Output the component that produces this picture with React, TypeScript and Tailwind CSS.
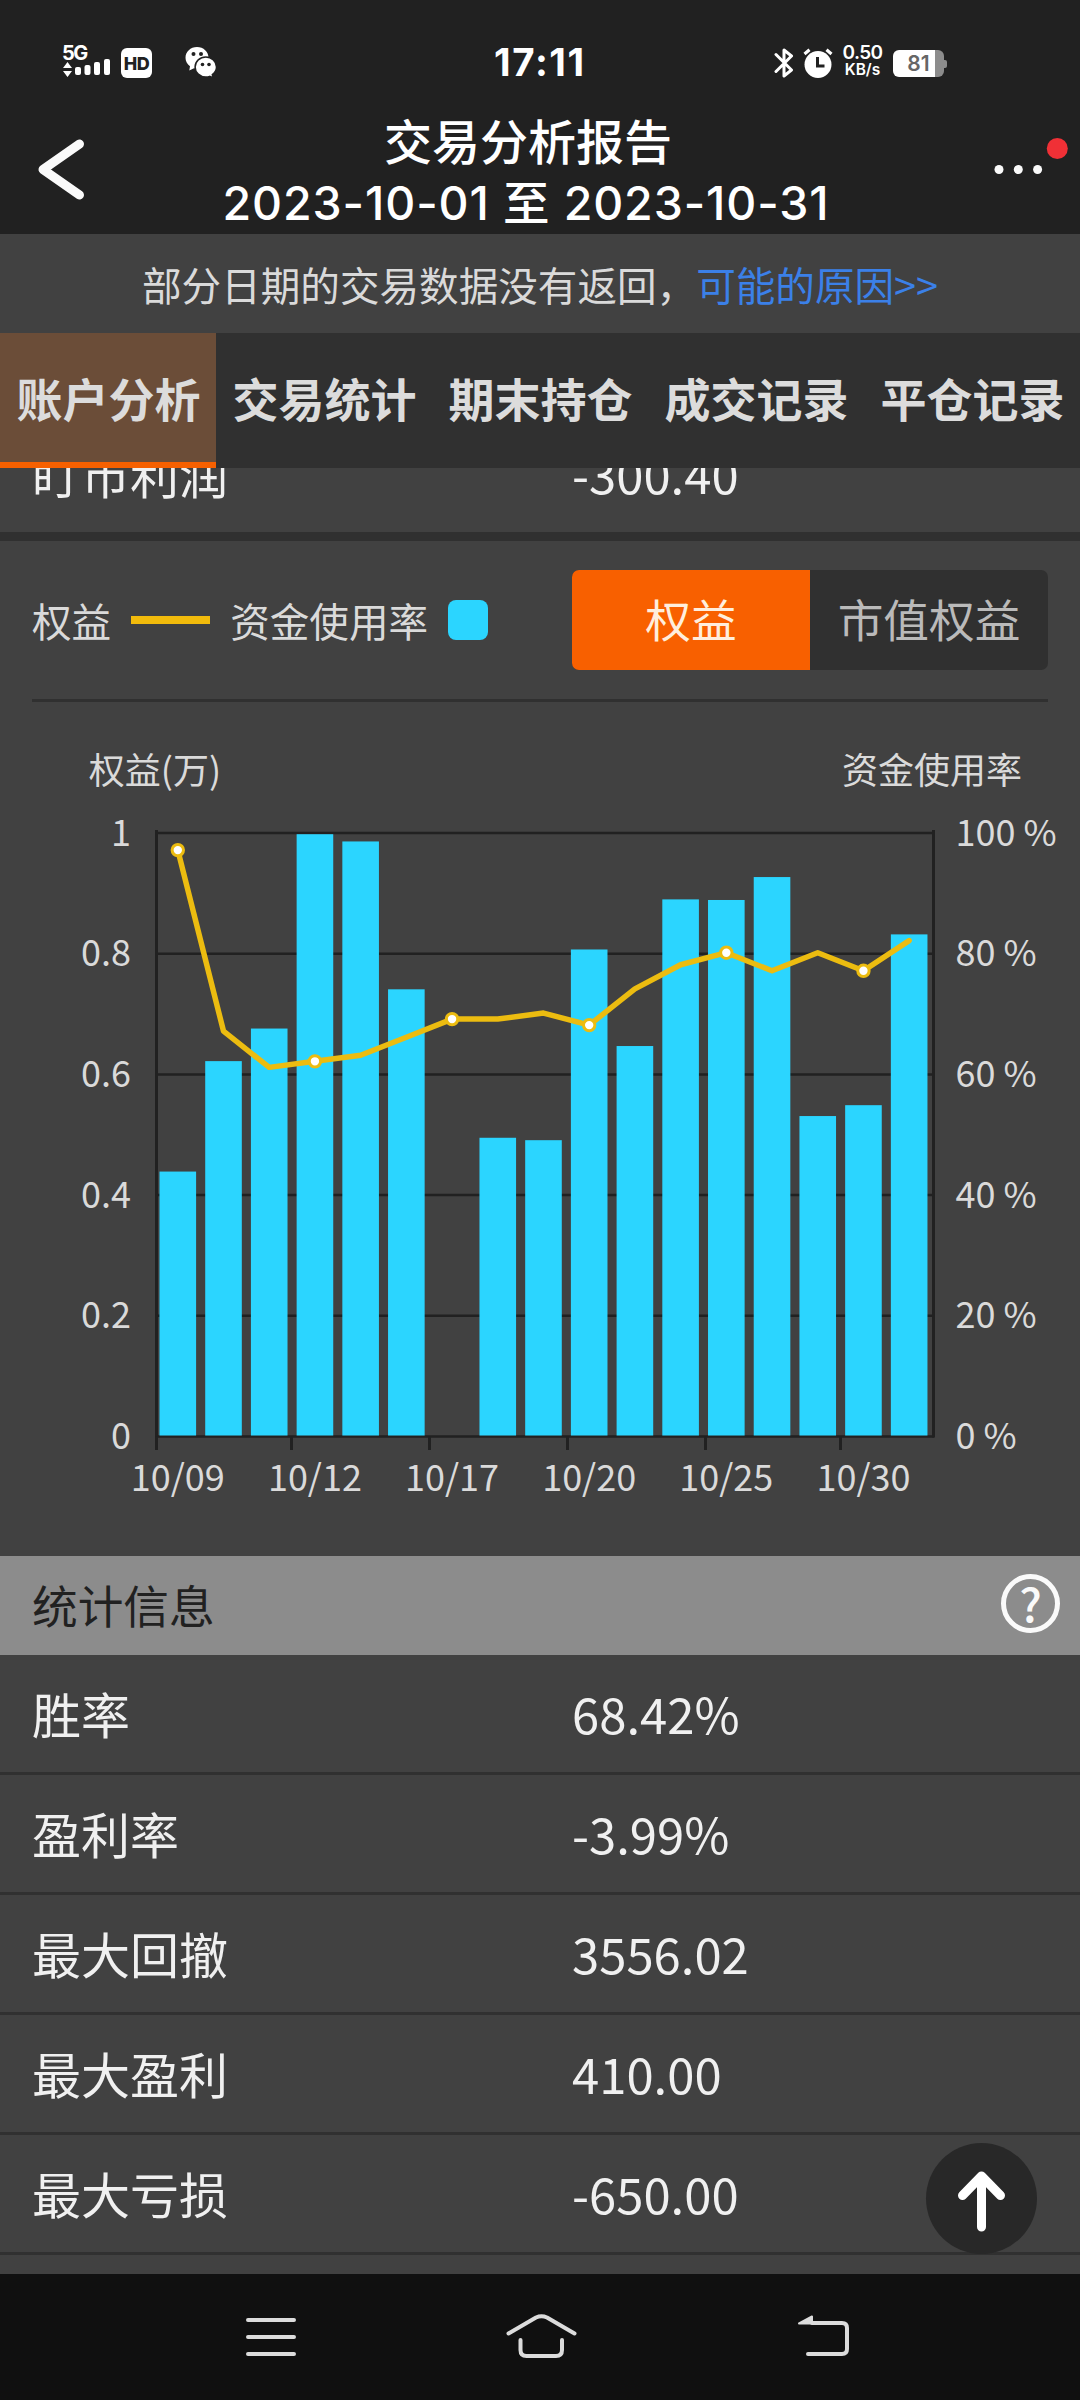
import { useState } from "react";

const TABS = ["账户分析", "交易统计", "期末持仓", "成交记录", "平仓记录"];

const STATS = [
  { label: "胜率", value: "68.42%" },
  { label: "盈利率", value: "-3.99%" },
  { label: "最大回撤", value: "3556.02" },
  { label: "最大盈利", value: "410.00" },
  { label: "最大亏损", value: "-650.00" },
];

// usage: fund usage in percent (bars), equity: in units of 10k (line)
const DAYS = [
  { usage: 43.9, equity: 0.97, date: "10/09" },
  { usage: 62.2, equity: 0.67 },
  { usage: 67.6, equity: 0.61 },
  { usage: 99.8, equity: 0.62, date: "10/12" },
  { usage: 98.6, equity: 0.63 },
  { usage: 74.1, equity: 0.66 },
  { usage: 0, equity: 0.69, date: "10/17" },
  { usage: 49.5, equity: 0.69 },
  { usage: 49.1, equity: 0.7 },
  { usage: 80.7, equity: 0.68, date: "10/20" },
  { usage: 64.7, equity: 0.74 },
  { usage: 89.0, equity: 0.78 },
  { usage: 88.9, equity: 0.8, date: "10/25" },
  { usage: 92.7, equity: 0.77 },
  { usage: 53.1, equity: 0.8 },
  { usage: 54.9, equity: 0.77, date: "10/30" },
  { usage: 83.2, equity: 0.82 },
];

const TICKS = [156.5, 291.5, 429.5, 567.5, 705.5, 840.5];

function StatusBar() {
  return (
    <div className="flex h-[104px] items-end pb-[26px] pl-[62px] font-['Inter','Noto_Sans_CJK_SC',sans-serif] text-white">
      <div className="flex w-[432px] items-end">
        <div className="w-[50px]">
          <div className="h-[17px] text-[20px] leading-[18px] font-bold tracking-[-1.5px]">5G</div>
          <svg width="50" height="17" viewBox="0 0 50 17" className="block overflow-visible" fill="white">
            <path d="M1 7 5.500 1 10 7ZM1 10H10L5.500 16Z" />
            <rect x="13" y="6" width="6" height="8" rx="2" />
            <rect x="22.500" y="4" width="6" height="10" rx="2" />
            <rect x="32" y="1" width="6" height="13" rx="2" />
            <rect x="42" y="-2" width="6" height="16" rx="2" />
          </svg>
        </div>
        <div className="ml-[9px] flex h-[30px] w-[31px] items-center justify-center rounded-[6px] bg-white text-[18px] font-extrabold tracking-[-0.5px] text-[#212121]">
          HD
        </div>
        <svg width="32" height="32" viewBox="0 0 32 32" className="ml-[33px]">
          <path fill="white" d="M12 1C5.500 1 .500 5.800 .500 11.800c0 3.400 1.700 6.400 4.500 8.400L4.300 24.500 9 22.200c1 .200 2 .300 3 .300 6.500 0 11.500-4.700 11.500-10.700S18.500 1 12 1Z" />
          <path
            fill="white"
            stroke="#212121"
            strokeWidth="1.500"
            d="M20.800 11c-5.900 0-10.700 4.400-10.700 10s4.800 10 10.700 10c1.400 0 2.700-.200 3.900-.600l3.300 1.300-.700-3.200c2.600-1.800 4.200-4.500 4.200-7.500C31.500 15.400 26.700 11 20.800 11Z"
          />
          <circle cx="8.500" cy="8" r="2" fill="#212121" />
          <circle cx="16" cy="8" r="2" fill="#212121" />
          <circle cx="17.500" cy="18.500" r="1.800" fill="#212121" />
          <circle cx="24" cy="18.500" r="1.800" fill="#212121" />
        </svg>
      </div>
      <div className="mb-[-8px] w-[92px] text-[38.5px] leading-[48px] font-bold tracking-[1.6px] whitespace-nowrap">17:11</div>
      <div className="flex flex-1 items-end justify-end pr-[133px]">
        <svg width="20" height="30" viewBox="0 0 20 30" fill="none" stroke="white" strokeWidth="3" strokeLinejoin="round" strokeLinecap="round">
          <path d="M2 6.500 17.500 22 10 28V2L17.500 8 2 23.500" />
        </svg>
        <svg width="32" height="30" viewBox="0 0 32 30" className="ml-2">
          <circle cx="16" cy="16.500" r="13.500" fill="white" />
          <path d="M2.500 6 7.500 1.800M29.500 6 24.500 1.800" stroke="white" strokeWidth="3.200" fill="none" />
          <path d="M15.500 9V18H22.500" stroke="#212121" strokeWidth="3" fill="none" />
        </svg>
        <div className="ml-[8px] flex h-[34px] w-[41px] flex-col items-center font-semibold">
          <span className="text-[19px] leading-[18px] tracking-[-0.6px]">0.50</span>
          <span className="text-[15.5px] leading-[16px]">KB/s</span>
        </div>
        <div className="ml-[10px] flex items-center">
          <div className="mb-px flex h-[27px] w-[51px] items-center justify-center overflow-hidden rounded-[6px] bg-linear-to-r from-white from-82% to-[#8c8c8c] to-82% text-[21px] font-semibold text-[#666666]">
            81
          </div>
          <div className="h-2 w-[3px] rounded-r-[2px] bg-[#8c8c8c]" />
        </div>
      </div>
    </div>
  );
}

function Header() {
  return (
    <div className="flex h-[130px] text-white">
      <svg width="92" height="130" viewBox="0 0 92 130" className="shrink-0" fill="none" stroke="#fafafa" strokeWidth="9" strokeLinecap="round" strokeLinejoin="round">
        <path d="M79.500 40 43 65.500 79.500 91" />
      </svg>
      <div className="ml-[36px] w-[800px] pt-[5px] text-center font-medium">
        <div className="text-[48px] leading-[60px]">交易分析报告</div>
        <div className="mt-[5px] mr-[4px] font-['Inter','Noto_Sans_CJK_SC',sans-serif] text-[46.5px] leading-[58px] tracking-[0.9px] whitespace-nowrap">
          2023-10-01 至 2023-10-31
        </div>
      </div>
      <svg width="152" height="130" viewBox="928 0 152 130" className="shrink-0" fill="#fafafa">
        <circle cx="999" cy="65.500" r="4.500" />
        <circle cx="1018.300" cy="65.500" r="4.500" />
        <circle cx="1037.600" cy="65.500" r="4.500" />
        <circle cx="1057.300" cy="44.500" r="10.500" fill="#f03036" />
      </svg>
    </div>
  );
}

function EquityChart() {
  const bottom = 734.5;
  const height = 603.5;
  const step = 45.71;
  const cx = (i: number) => 177.8 + i * step;
  const cy = (v: number) => bottom - v * height;
  const lineY = (v: number) => cy(v) - 1;
  const levels = [0, 0.2, 0.4, 0.6, 0.8, 1];

  return (
    <svg width="1080" height="854" viewBox="0 0 1080 854" className="block" fontSize="36" fill="#dadada">
      <text x="155" y="81.500" textAnchor="middle">权益(万)</text>
      <text x="932" y="81.500" textAnchor="middle">资金使用率</text>

      {levels.map((v) => (
        <g key={v}>
          <path d={`M155 ${cy(v)}H934`} stroke="#212121" strokeWidth="2.500" />
          <text x="131" y={cy(v) + 12.5} textAnchor="end">{v}</text>
          <text x="955.5" y={cy(v) + 12.5}>{v * 100} %</text>
        </g>
      ))}
      <path d={`M156.500 128V${bottom}M933.500 128V${bottom + 1}`} stroke="#212121" strokeWidth="3" />
      {TICKS.map((x) => (
        <path key={x} d={`M${x} ${bottom}V748`} stroke="#212121" strokeWidth="3" />
      ))}

      {DAYS.map((d, i) => (
        <rect key={i} x={cx(i) - 18.3} y={cy(d.usage / 100)} width="36.600" height={(height * d.usage) / 100 - (d.usage ? 1 : 0)} fill="#2bd5ff" />
      ))}
      <polyline
        points={DAYS.map((d, i) => `${cx(i)},${lineY(d.equity)}`).join(" ")}
        fill="none"
        stroke="#ecbc10"
        strokeWidth="5.500"
        strokeLinejoin="round"
        strokeLinecap="round"
      />
      {DAYS.map((d, i) =>
        d.date ? (
          <g key={d.date}>
            <circle cx={cx(i)} cy={lineY(d.equity)} r="5.700" fill="white" stroke="#ecbc10" strokeWidth="3" />
            <text x={cx(i)} y="788.500" textAnchor="middle">{d.date}</text>
          </g>
        ) : null
      )}
    </svg>
  );
}

function Row({ label, value }: { label: string; value: string }) {
  return (
    <div className="flex h-[120px] shrink-0 items-center border-b-[3px] border-[#303030] px-8 pb-[2px] text-[49px] text-[#f0f0f0]">
      <span className="w-[540px]">{label}</span>
      <span>{value}</span>
    </div>
  );
}

function NavBar() {
  return (
    <div className="flex h-[126px] items-start bg-[#101010]">
      <svg width="1080" height="126" viewBox="0 0 1080 126" fill="none" stroke="#dcdcdc" strokeWidth="4" strokeLinecap="round" strokeLinejoin="round">
        <path d="M248 46H294M248 63H294M248 80H294" />
        <path d="M508.500 59.500 536 43.500Q541.500 41 547 43.500L574.500 59.500" />
        <path d="M520.500 66V76Q520.500 82 526.500 82H556Q562 82 562 76V66" />
        <path d="M812 49H842Q847 49 847 54V75Q847 80 842 80H808" />
        <path d="M799 49.500 812 42.500V49.500Z" fill="#dcdcdc" strokeWidth="2" />
      </svg>
    </div>
  );
}

export default function App() {
  const [tab, setTab] = useState(0);
  const [mode, setMode] = useState(0);

  return (
    <div className="relative flex h-[2400px] w-[1080px] flex-col overflow-hidden bg-[#414141] font-['Noto_Sans_CJK_SC',sans-serif]">
      <div className="h-[234px] shrink-0 bg-[#212121]">
        <StatusBar />
        <Header />
      </div>

      <div className="flex h-[99px] shrink-0 items-center justify-center text-[39.6px] whitespace-nowrap text-[#dadada]">
        部分日期的交易数据没有返回，<span className="text-[#3b80e8]">可能的原因&gt;&gt;</span>
      </div>

      <div className="flex h-[135px] shrink-0 bg-[#303030]">
        {TABS.map((t, i) => (
          <button
            key={t}
            onClick={() => setTab(i)}
            className={`w-[216px] border-b-[6px] pl-px text-[46px] font-bold whitespace-nowrap text-[#dcdcdc] ${
              i === tab ? "border-[#f66000] bg-[#6b4d38]" : "border-[#303030]"
            }`}
          >
            {t}
          </button>
        ))}
      </div>

      {/* last row of the account list, scrolled half way under the tabs */}
      <div className="flex h-[67px] shrink-0 flex-col justify-end overflow-hidden">
        <Row label="盯市利润" value="-300.40" />
      </div>
      <div className="h-[6px] shrink-0 bg-[#303030]" />

      <div className="mx-8 flex h-[161px] shrink-0 items-center justify-between border-b-[3px] border-[#303030]">
        <div className="flex items-center text-[39.6px] text-[#dadada]">
          <span>权益</span>
          <span className="ml-5 h-2 w-[79px] bg-[#f2bb0c]" />
          <span className="ml-5">资金使用率</span>
          <span className="ml-5 size-10 rounded-[8px] bg-[#2bd5ff]" />
        </div>
        <div className="flex h-[100px] w-[476px] overflow-hidden rounded-[7px] bg-[#303030] text-[45.7px]">
          {["权益", "市值权益"].map((m, i) => (
            <button
              key={m}
              onClick={() => setMode(i)}
              className={`w-1/2 pb-[3px] whitespace-nowrap ${i === mode ? "bg-[#f86000] text-[#ffeedd]" : "text-[#bababa]"}`}
            >
              {m}
            </button>
          ))}
        </div>
      </div>

      <EquityChart />

      <div className="flex h-[99px] shrink-0 items-center justify-between bg-[#8c8c8c] pr-5 pl-8 text-[45.7px] text-[#212121]">
        <span className="pb-[2px]">统计信息</span>
        <span className="mb-1 flex size-[59px] items-center justify-center rounded-full border-[5px] border-[#fafafa] pb-[4px] text-[46px] leading-none font-medium text-[#fafafa]">
          ?
        </span>
      </div>
      <div className="h-[619px] shrink-0 overflow-hidden">
        {STATS.map((s) => (
          <Row key={s.label} {...s} />
        ))}
      </div>

      <NavBar />

      <button className="absolute top-[2143px] left-[926px] size-[111px] rounded-full bg-[#282828]">
        <svg width="111" height="111" viewBox="0 0 111 111" fill="none" stroke="white" strokeWidth="9" strokeLinecap="round" strokeLinejoin="round">
          <path d="M55.500 84V33M36.500 52.500 55.500 33 74.500 52.500" />
        </svg>
      </button>
    </div>
  );
}
